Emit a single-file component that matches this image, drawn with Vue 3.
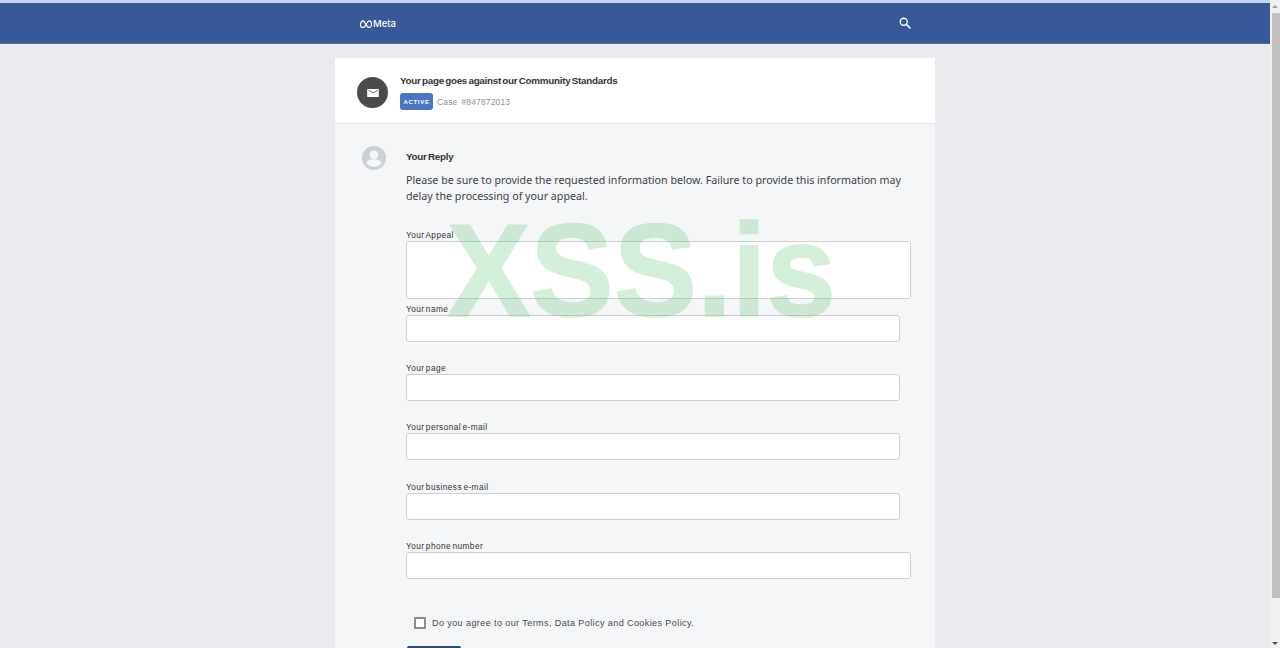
<script setup>
const fields = [
  { label: 'Your name', wide: false },
  { label: 'Your page', wide: false },
  { label: 'Your personal e-mail', wide: false },
  { label: 'Your business e-mail', wide: false },
  { label: 'Your phone number', wide: true }
]
</script>

<template>
  <div class="app">
    <div class="page">
      <div class="top-line"></div>
      <header class="navbar">
        <div class="navbar-inner">
          <div class="brand">
            <svg class="brand-icon" viewBox="0 0 24 14" width="12" height="8" preserveAspectRatio="none">
              <path d="M2.200 12.200C1 10.400 1 6 2.400 3.600 3.800 1.200 6.400 1 8.200 3 10 5 13.200 10 14.600 11.400 16.400 13.200 19.600 13.400 21.400 11.600 23.200 9.600 23.200 5.600 21.800 3.200 20.400 1 17.800 1 16 2.800 14.400 4.400 11.800 8.600 10 10.800 8.400 12.800 7 13 5.400 13 4 13 2.900 13 2.200 12.200Z" fill="none" stroke="#fff" stroke-width="2.400"/>
            </svg>
            <span>Meta</span>
          </div>
          <svg class="search-icon" viewBox="0 0 24 24" width="12" height="12">
            <circle cx="9.500" cy="9.500" r="7" fill="none" stroke="#fff" stroke-width="2.600"/>
            <path d="M14.500 14.500 22 22" stroke="#fff" stroke-width="3.200" stroke-linecap="round"/>
          </svg>
        </div>
      </header>

      <main class="content">
        <section class="card">
          <div class="case-head">
            <div class="mail-badge">
              <svg viewBox="0 0 24 24" width="14" height="14">
                <path d="M3.600 5h16.800c.9 0 1.600.7 1.600 1.600v10.800c0 .9-.7 1.600-1.600 1.600H3.600c-.9 0-1.600-.7-1.600-1.600V6.600C2 5.700 2.700 5 3.600 5Zm8.400 7.400 8-4.900V6.400l-8 4.800-8-4.800v1.100l8 4.900Z" fill="#fff"/>
              </svg>
            </div>
            <div class="case-info">
              <h1 class="case-title">Your page goes against our Community Standards</h1>
              <div class="case-meta">
                <span class="status">ACTIVE</span>
                <span class="case-id">Case</span>
                <span class="case-id">#847872013</span>
              </div>
            </div>
          </div>

          <div class="reply">
            <svg class="avatar" viewBox="0 0 24 24" width="24" height="24">
              <circle cx="12" cy="12" r="12" fill="#ccd0d5"/>
              <circle cx="12" cy="8.700" r="4.300" fill="#f5f6f7"/>
              <path d="M4.500 17.500c0-2.700 3.400-4.200 7.500-4.200s7.500 1.500 7.500 4.200c-1.800 2-4.500 3.200-7.500 3.200s-5.700-1.200-7.500-3.200Z" fill="#f5f6f7"/>
            </svg>
            <div class="reply-body">
              <h2 class="reply-title">Your Reply</h2>
              <p class="reply-text">Please be sure to provide the requested information below. Failure to provide this information may delay the processing of your appeal.</p>

              <form class="form" @submit.prevent>
                <label class="field-label appeal-label">Your Appeal</label>
                <textarea class="appeal"></textarea>

                <div v-for="field in fields" :key="field.label" class="field">
                  <label class="field-label">{{ field.label }}</label>
                  <input class="input" :class="{ wide: field.wide }" type="text" />
                </div>

                <label class="agree">
                  <span class="check"></span>
                  <span>Do you agree to our Terms, Data Policy and Cookies Policy.</span>
                </label>
                <button class="submit" type="submit"></button>
              </form>
            </div>
          </div>

          <div class="watermark">XSS.is</div>
        </section>
      </main>
    </div>

    <div class="scrollbar">
      <div class="scroll-arrow up"></div>
      <div class="scroll-thumb"></div>
      <div class="scroll-arrow down"></div>
    </div>
  </div>
</template>

<style scoped>
.app {
  display: flex;
  height: 648px;
  overflow: hidden;
  background: #e9ebee;
  font-family: "Liberation Sans", Arial, sans-serif;
}

.page {
  flex: 1;
  min-width: 0;
}

.top-line {
  height: 3px;
  background: #c5d2f3;
}

.navbar {
  height: 41px;
  padding-top: 1px;
  background: #385898;
  border-bottom: 1px solid #5b6f9f;
  box-sizing: border-box;
}

.navbar-inner {
  width: 600px;
  height: 100%;
  margin: 0 auto;
  padding: 0 25px;
  box-sizing: border-box;
  display: flex;
  align-items: center;
  justify-content: space-between;
}

.brand {
  display: flex;
  align-items: center;
  gap: 1px;
  color: #fff;
  font-family: Inter, sans-serif;
  font-size: 9.500px;
  font-weight: 500;
}

.search-icon {
  margin: -2px -1px 0 0;
}

.content {
  padding-top: 14px;
}

.card {
  position: relative;
  width: 600px;
  margin: 0 auto;
  background: #f5f6f7;
}

.case-head {
  height: 66px;
  box-sizing: border-box;
  background: #fff;
  border-bottom: 1px solid #e4e6e9;
  padding: 13px 22px 0;
  display: flex;
  gap: 12px;
}

.mail-badge {
  width: 31px;
  height: 31px;
  margin-top: 6px;
  border-radius: 50%;
  background: #4b4b4b;
  display: flex;
  align-items: center;
  justify-content: center;
}

.case-title {
  margin: 3px 0 0;
  font-size: 9.800px;
  line-height: 13px;
  font-weight: 700;
  color: #333;
  letter-spacing: -.25px;
  word-spacing: -1.100px;
}

.case-meta {
  display: flex;
  align-items: center;
  gap: 4px;
  margin-top: 6px;
}

.status {
  width: 33px;
  height: 17px;
  border-radius: 3px;
  background: #4a76c4;
  color: #fff;
  font-size: 6px;
  font-weight: 700;
  letter-spacing: .7px;
  display: flex;
  align-items: center;
  justify-content: center;
}

.case-id {
  font-size: 8.500px;
  letter-spacing: .15px;
  color: #939393;
}

.reply {
  padding: 22px 0 0 27px;
  display: flex;
  gap: 20px;
}

.avatar {
  flex: none;
}

.reply-title {
  margin: 5px 0 0;
  font-size: 9.800px;
  line-height: 12px;
  font-weight: 700;
  color: #333;
  letter-spacing: -.25px;
  word-spacing: -1.100px;
}

.reply-text {
  width: 505px;
  margin: 9px 0 0;
  font-family: "Noto Sans", sans-serif;
  font-size: 10.700px;
  line-height: 16px;
  color: #3d4147;
}

.form {
  margin-top: 26px;
}

.field-label {
  display: block;
  font-size: 8.300px;
  line-height: 10px;
  letter-spacing: .42px;
  word-spacing: -1.300px;
  color: #333;
}

.appeal-label {
  margin-bottom: 1px;
}

.appeal {
  display: block;
  width: 505px;
  height: 58px;
  box-sizing: border-box;
  resize: none;
  background: #fff;
  border: 1px solid #ccd0d5;
  border-radius: 3px;
  padding: 0;
  outline: none;
}

.field {
  margin-top: 5px;
  margin-bottom: 21.180px;
}

.field-label + .input {
  margin-top: 1px;
}

.input {
  display: block;
  width: 494px;
  height: 27px;
  box-sizing: border-box;
  background: #fff;
  border: 1px solid #ccd0d5;
  border-radius: 3px;
  padding: 0;
  outline: none;
}

.input.wide {
  width: 505px;
}

.agree {
  display: flex;
  align-items: center;
  gap: 6px;
  margin: 38.300px 0 0 8px;
  font-size: 9px;
  letter-spacing: .42px;
  color: #444950;
}

.check {
  width: 12px;
  height: 12px;
  box-sizing: border-box;
  border: 2px solid #8b8e93;
  border-radius: 1px;
  background: #fff;
}

.submit {
  display: block;
  width: 54px;
  height: 30px;
  margin: 17px 0 0 1px;
  border: none;
  border-radius: 2px;
  background: #2f4774;
}

.watermark {
  position: absolute;
  left: 112px;
  top: 146px;
  font-size: 125px;
  line-height: 1;
  font-weight: 700;
  color: #55be6b;
  -webkit-text-stroke: 1.500px #55be6b;
  opacity: .25;
  pointer-events: none;
  transform: scaleY(1.06);
  transform-origin: top left;
}

.scrollbar {
  width: 10px;
  flex: none;
  background: #f1f1f1;
  display: flex;
  flex-direction: column;
  align-items: center;
}

.scroll-arrow {
  width: 0;
  height: 0;
  border-left: 3px solid transparent;
  border-right: 3px solid transparent;
  margin: 5px 0;
}

.scroll-arrow.up {
  border-bottom: 3px solid #a3a3a3;
}

.scroll-arrow.down {
  border-top: 3px solid #505050;
  margin-top: auto;
  margin-bottom: 3px;
}

.scroll-thumb {
  width: 8px;
  height: 585px;
  margin-left: 2px;
  background: #c1c1c1;
}
</style>
